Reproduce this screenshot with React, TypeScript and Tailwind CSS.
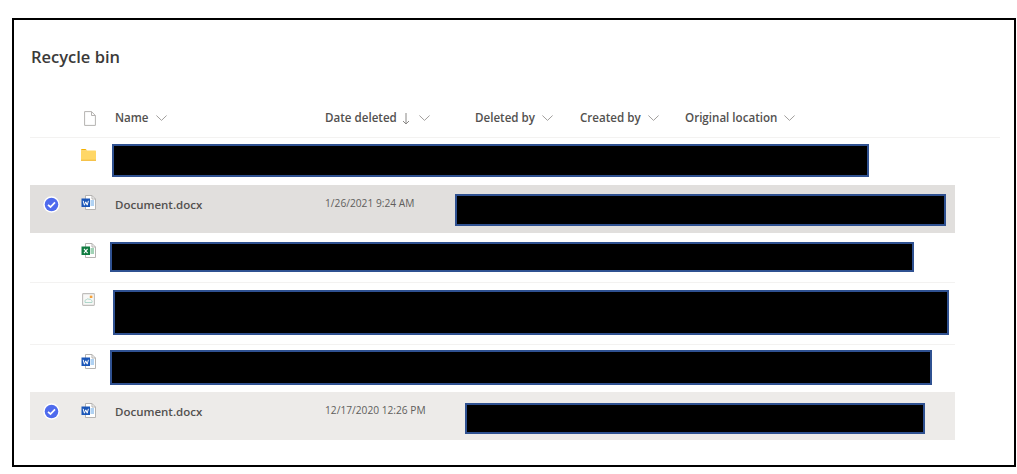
import React from "react";

const font = { fontFamily: '"Open Sans", "Noto Sans", sans-serif' };

function Chevron() {
  return (
    <svg width="11" height="6" viewBox="0 0 11 6" className="shrink-0 block">
      <path d="M0.4 0.5 L5.5 5.4 L10.6 0.5" fill="none" stroke="#a19f9d" strokeWidth="1" />
    </svg>
  );
}

function Check() {
  return (
    <svg width="17" height="17" viewBox="0 0 17 17" className="shrink-0">
      <circle cx="8.5" cy="8.5" r="8.2" fill="#ffffff" />
      <circle cx="8.5" cy="8.5" r="6.8" fill="#4f6bed" />
      <path d="M5 8.8 L7.5 11 L12 6.3" fill="none" stroke="#ffffff" strokeWidth="1.7" />
    </svg>
  );
}

function Page({ children }: { children?: React.ReactNode }) {
  return (
    <svg width="16" height="16" viewBox="0 0 16 16" className="shrink-0 block">
      <path d="M4.5 0.5 H11 L14.5 4 V14.5 H4.5 Z" fill="#ffffff" stroke="#b5b3b1" strokeWidth="1" />
      <path d="M11 0.5 V4 H14.5" fill="none" stroke="#b5b3b1" strokeWidth="1" />
      {children}
    </svg>
  );
}

function Word() {
  return (
    <Page>
      <path d="M9.5 6 H13 M9.5 8 H13 M9.5 10 H13" stroke="#62a5e8" strokeWidth="1.2" />
      <rect x="0.5" y="3.5" width="8.5" height="8.5" fill="#1a56b8" />
      <path d="M2.2 5.8 L3.4 10.2 L4.8 6.8 L6.2 10.2 L7.4 5.8" fill="none" stroke="#ffffff" strokeWidth="1" />
    </Page>
  );
}

function Excel() {
  return (
    <Page>
      <path d="M9.5 6 H13 M9.5 8 H13 M9.5 10 H13" stroke="#45a86f" strokeWidth="1.2" />
      <rect x="0.5" y="3.5" width="8.5" height="8.5" fill="#107c41" />
      <path d="M3 5.8 L6.6 10.2 M6.6 5.8 L3 10.2" fill="none" stroke="#ffffff" strokeWidth="1.1" />
    </Page>
  );
}

function ImageFile() {
  return (
    <svg width="13" height="13" viewBox="0 0 13 13" className="shrink-0 block">
      <rect x="0.6" y="0.6" width="11.8" height="11.8" rx="0.8" fill="#f8f8f7" stroke="#c0bebc" strokeWidth="1.1" />
      <path d="M3 9.5 V7.8 Q3.2 6.6 4.6 6.5 Q5.6 5.3 6.8 6.2 Q9 5.8 9.6 7.4 Q10.4 8 10 9.5 Z" fill="none" stroke="#a5d3c4" strokeWidth="0.9" />
      <rect x="7.8" y="2.6" width="2.6" height="2.4" fill="#f6a13a" />
    </svg>
  );
}

function Folder() {
  return (
    <svg width="15" height="12" viewBox="0 0 15 12" className="shrink-0 block">
      <path d="M0 1 Q0 0 1 0 H4.5 L6.2 1.6 H0 Z" fill="#f4b000" />
      <rect x="0" y="1.6" width="15" height="10.4" rx="0.6" fill="#ffd766" />
      <rect x="0" y="10.6" width="15" height="1.4" fill="#f5c24a" />
    </svg>
  );
}

function Redact({ className }: { className: string }) {
  return <div className={`bg-black border-2 border-[#2f5191] shrink-0 ${className}`} />;
}

function Head({ label, className, arrow }: { label: string; className: string; arrow?: boolean }) {
  return (
    <div className={`flex items-center shrink-0 ${className}`}>
      <span className="text-[11.6px] font-semibold text-[#53514f] leading-4">{label}</span>
      {arrow && (
        <svg width="8" height="12" viewBox="0 0 8 12" className="shrink-0 ml-[5px] mt-[2px]">
          <path d="M4 0 V11 M1 8 L4 11 L7 8" fill="none" stroke="#8a8886" strokeWidth="1" />
        </svg>
      )}
      <span className={arrow ? "ml-[9px]" : "ml-[7px]"}>
        <Chevron />
      </span>
    </div>
  );
}

function Doc({ label, date, dateWidth }: { label: string; date: string; dateWidth: string }) {
  return (
    <>
      <span className="ml-[18px] w-[210px] shrink-0 mt-[12px] text-[11.5px] leading-4 font-semibold text-[#53514f]">{label}</span>
      <span className={`shrink-0 text-[10.2px] mt-[10px] leading-4 text-[#605e5c] ${dateWidth}`}>{date}</span>
    </>
  );
}

export default function App() {
  return (
    <div className="w-[1017px] h-[474px] bg-white pt-[18px] pl-[12px] overflow-hidden" style={font}>
      <div className="w-[1004px] h-[449px] border-2 border-black bg-white pl-[16px] flex flex-col">
        <h1 className="mt-[25px] ml-[1px] text-[16.5px] leading-[24px] font-semibold text-[#3b3a39]">Recycle bin</h1>

        <div className="mt-[29px] w-[970px] h-[40px] shrink-0 border-b border-[#f3f2f1] flex items-center pt-[1px]">
          <div className="w-[85px] pl-[54px] shrink-0 flex">
            <svg width="12" height="15" viewBox="0 0 12 15" className="shrink-0">
              <path d="M0.6 0.6 H7.5 L11.4 4.5 V14.4 H0.6 Z" fill="#fff" stroke="#b5b3b1" strokeWidth="1" />
              <path d="M7.5 0.6 V4.5 H11.4" fill="none" stroke="#b5b3b1" strokeWidth="1" />
            </svg>
          </div>
          <Head label="Name" className="w-[210px]" />
          <Head label="Date deleted" className="w-[150px]" arrow />
          <Head label="Deleted by" className="w-[105px]" />
          <Head label="Created by" className="w-[105px]" />
          <Head label="Original location" className="w-[150px]" />
        </div>

        <div className="w-[925px] flex flex-col">
          <div className="h-[47px] flex items-start pl-[51px]">
            <span className="mt-[11px] shrink-0"><Folder /></span>
            <Redact className="ml-[16px] mt-[6px] w-[757px] h-[33px]" />
          </div>

          <div className="h-[48px] flex items-start bg-[#e1dfdd]">
            <span className="w-[51px] pl-[13px] pt-[11px] shrink-0 flex"><Check /></span>
            <span className="mt-[10px] shrink-0"><Word /></span>
            <Doc label="Document.docx" date="1/26/2021 9:24 AM" dateWidth="w-[130px]" />
            <Redact className="mt-[9px] w-[491px] h-[32px]" />
          </div>

          <div className="h-[50px] flex items-start pl-[51px] border-b border-[#f3f2f1]">
            <span className="mt-[10px] shrink-0"><Excel /></span>
            <Redact className="ml-[13px] mt-[9px] w-[804px] h-[30px]" />
          </div>

          <div className="h-[62px] flex items-start pl-[52px] border-b border-[#f3f2f1]">
            <span className="mt-[10px] shrink-0"><ImageFile /></span>
            <Redact className="ml-[18px] mt-[7px] w-[836px] h-[45px]" />
          </div>

          <div className="h-[47px] flex items-start pl-[51px]">
            <span className="mt-[9px] shrink-0"><Word /></span>
            <Redact className="ml-[13px] mt-[5px] w-[822px] h-[35px]" />
          </div>

          <div className="h-[48px] flex items-start bg-[#edebe9]">
            <span className="w-[51px] pl-[13px] pt-[11px] shrink-0 flex"><Check /></span>
            <span className="mt-[11px] shrink-0"><Word /></span>
            <Doc label="Document.docx" date="12/17/2020 12:26 PM" dateWidth="w-[140px]" />
            <Redact className="mt-[11px] w-[460px] h-[31px]" />
          </div>
        </div>
      </div>
    </div>
  );
}
